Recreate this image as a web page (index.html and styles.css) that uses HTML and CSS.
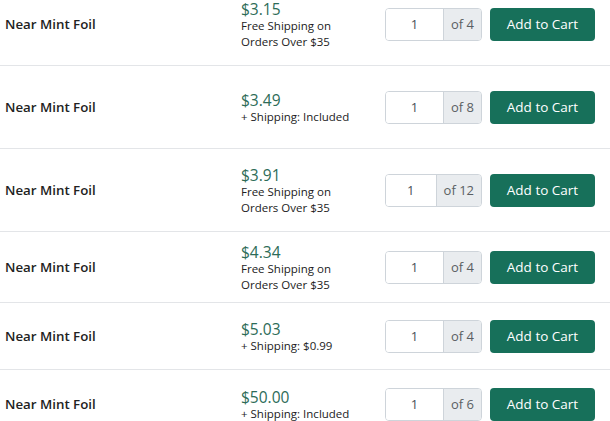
FILE: index.html
```html
<!DOCTYPE html>
<html>
<head>
<meta charset="utf-8">
<link rel="stylesheet" href="styles.css">
</head>
<body>
<div class="list">
  <div class="row h83">
    <div class="cond">Near Mint Foil</div>
    <div class="price-col"><div class="price">$3.15</div><div class="ship">Free Shipping on<br>Orders Over $35</div></div>
    <div class="qty"><div class="input">1</div><div class="addon">of 4</div></div>
    <button class="btn">Add to Cart</button>
  </div>
  <div class="row h83">
    <div class="cond">Near Mint Foil</div>
    <div class="price-col"><div class="price">$3.49</div><div class="ship">+ Shipping: Included</div></div>
    <div class="qty"><div class="input">1</div><div class="addon">of 8</div></div>
    <button class="btn">Add to Cart</button>
  </div>
  <div class="row h83">
    <div class="cond">Near Mint Foil</div>
    <div class="price-col"><div class="price">$3.91</div><div class="ship">Free Shipping on<br>Orders Over $35</div></div>
    <div class="qty"><div class="input">1</div><div class="addon">of 12</div></div>
    <button class="btn">Add to Cart</button>
  </div>
  <div class="row h71">
    <div class="cond">Near Mint Foil</div>
    <div class="price-col"><div class="price">$4.34</div><div class="ship">Free Shipping on<br>Orders Over $35</div></div>
    <div class="qty"><div class="input">1</div><div class="addon">of 4</div></div>
    <button class="btn">Add to Cart</button>
  </div>
  <div class="row h67">
    <div class="cond">Near Mint Foil</div>
    <div class="price-col"><div class="price">$5.03</div><div class="ship">+ Shipping: $0.99</div></div>
    <div class="qty"><div class="input">1</div><div class="addon">of 4</div></div>
    <button class="btn">Add to Cart</button>
  </div>
  <div class="row h69">
    <div class="cond">Near Mint Foil</div>
    <div class="price-col"><div class="price">$50.00</div><div class="ship">+ Shipping: Included</div></div>
    <div class="qty"><div class="input">1</div><div class="addon">of 6</div></div>
    <button class="btn">Add to Cart</button>
  </div>
</div>
</body>
</html>
```
FILE: styles.css
```css
html, body {
  margin: 0;
  padding: 0;
  background: #fff;
  overflow: hidden;
}
body {
  font-family: "Open Sans", "Noto Sans", sans-serif;
  color: #212529;
}
.list {
  margin-top: -17px;
}
.row {
  display: flex;
  align-items: center;
  border-bottom: 1px solid #e3e5e8;
  box-sizing: border-box;
}
.h83 { height: 83px; }
.h71 { height: 71px; }
.h67 { height: 67px; }
.h69 { height: 69px; }
.cond {
  width: 236px;
  padding-left: 5px;
  font-size: 13.3px;
  font-weight: 600;
  color: #222;
}
.price-col {
  width: 144px;
  padding-top: 2px;
}
.price {
  font-size: 15.5px;
  line-height: 18px;
  color: #2d6c58;
}
.ship {
  font-size: 11.5px;
  line-height: 16px;
  color: #222;
}
.qty {
  width: 97px;
  height: 33px;
  display: flex;
  border: 1px solid #ced4da;
  border-radius: 4px;
  box-sizing: border-box;
  overflow: hidden;
}
.input {
  flex: 1;
  background: #fff;
  display: flex;
  align-items: center;
  justify-content: center;
  font-size: 13px;
  color: #495057;
}
.addon {
  background: #e9ecef;
  border-left: 1px solid #ced4da;
  padding: 0 7px;
  display: flex;
  align-items: center;
  font-size: 13px;
  color: #5a5f63;
}
.btn {
  margin-left: 8px;
  width: 105px;
  height: 33px;
  background: #17705a;
  color: #fff;
  border: none;
  border-radius: 4px;
  font-family: inherit;
  font-size: 13.5px;
  padding: 0;
}
```
